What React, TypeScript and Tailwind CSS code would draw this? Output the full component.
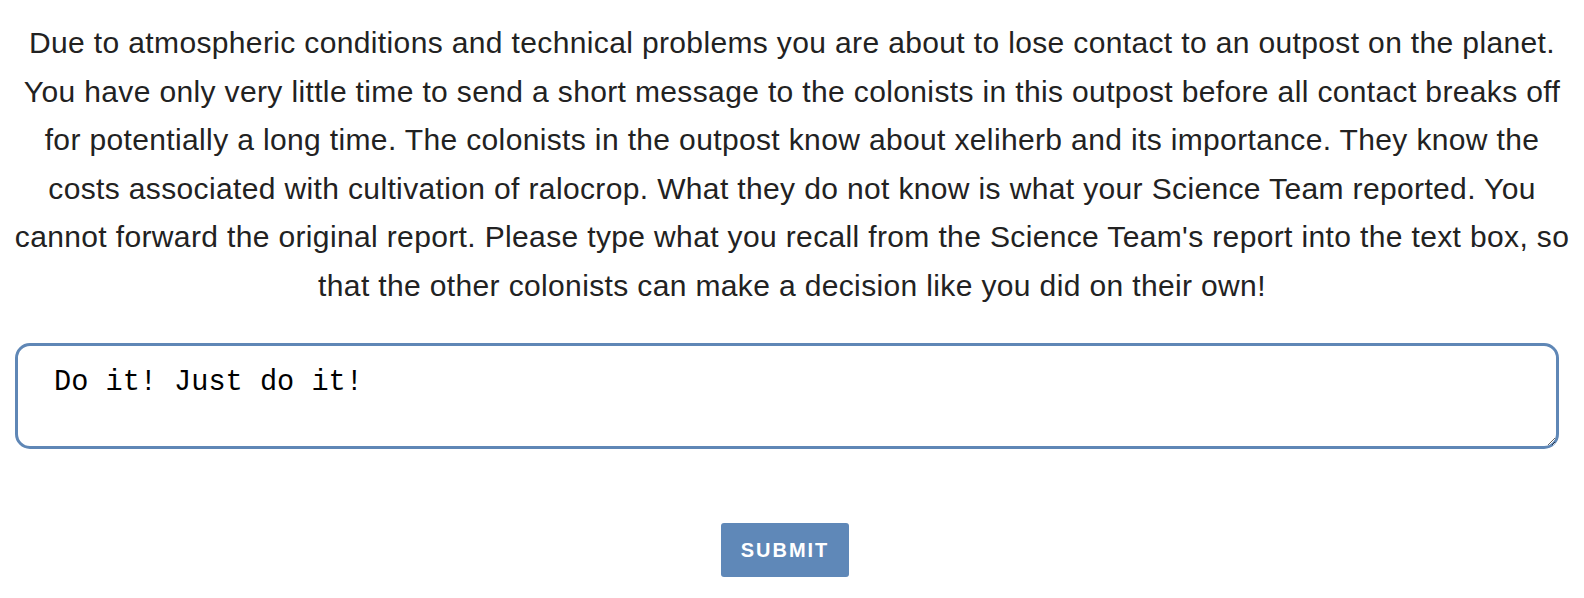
import { useEffect, useRef } from "react";

const lines = [
  "Due to atmospheric conditions and technical problems you are about to lose contact to an outpost on the planet.",
  "You have only very little time to send a short message to the colonists in this outpost before all contact breaks off",
  "for potentially a long time. The colonists in the outpost know about xeliherb and its importance. They know the",
  "costs associated with cultivation of ralocrop. What they do not know is what your Science Team reported. You",
  "cannot forward the original report. Please type what you recall from the Science Team's report into the text box, so",
  "that the other colonists can make a decision like you did on their own!",
];

export default function App() {
  const box = useRef<HTMLTextAreaElement>(null);

  useEffect(() => {
    const el = box.current;
    if (!el) return;
    el.focus();
    el.setSelectionRange(el.value.length, el.value.length);
  }, []);

  return (
    <div className="min-h-[598px] bg-white px-[8px] pt-[19px]">
      <p
        className="text-center text-[30px] leading-[48.6px] tracking-[0.36px] text-[#222222]"
        style={{ fontFamily: '"Liberation Sans", Arial, sans-serif' }}
      >
        {lines.map(line => (
          <span key={line} className="block whitespace-nowrap">
            {line}
          </span>
        ))}
      </p>
      <div className="mt-[32px] px-[7px]">
        <textarea
          ref={box}
          defaultValue="Do it! Just do it!"
          className="block h-[106px] w-[1544px] resize-y rounded-[15px] border-[3px] border-[#5f87b6] px-[36px] py-[20px] text-[28.6px] leading-[34px] text-black caret-black outline-none"
          style={{ fontFamily: '"Liberation Mono", "Courier New", monospace' }}
        />
      </div>
      <div className="mt-[74px] flex justify-center pr-[14px]">
        <button
          className="h-[54px] w-[128px] rounded-[3px] bg-[#5f88b8] text-[20px] font-bold tracking-[2px] text-white"
          style={{ fontFamily: '"Liberation Sans", Arial, sans-serif' }}
        >
          SUBMIT
        </button>
      </div>
    </div>
  );
}
